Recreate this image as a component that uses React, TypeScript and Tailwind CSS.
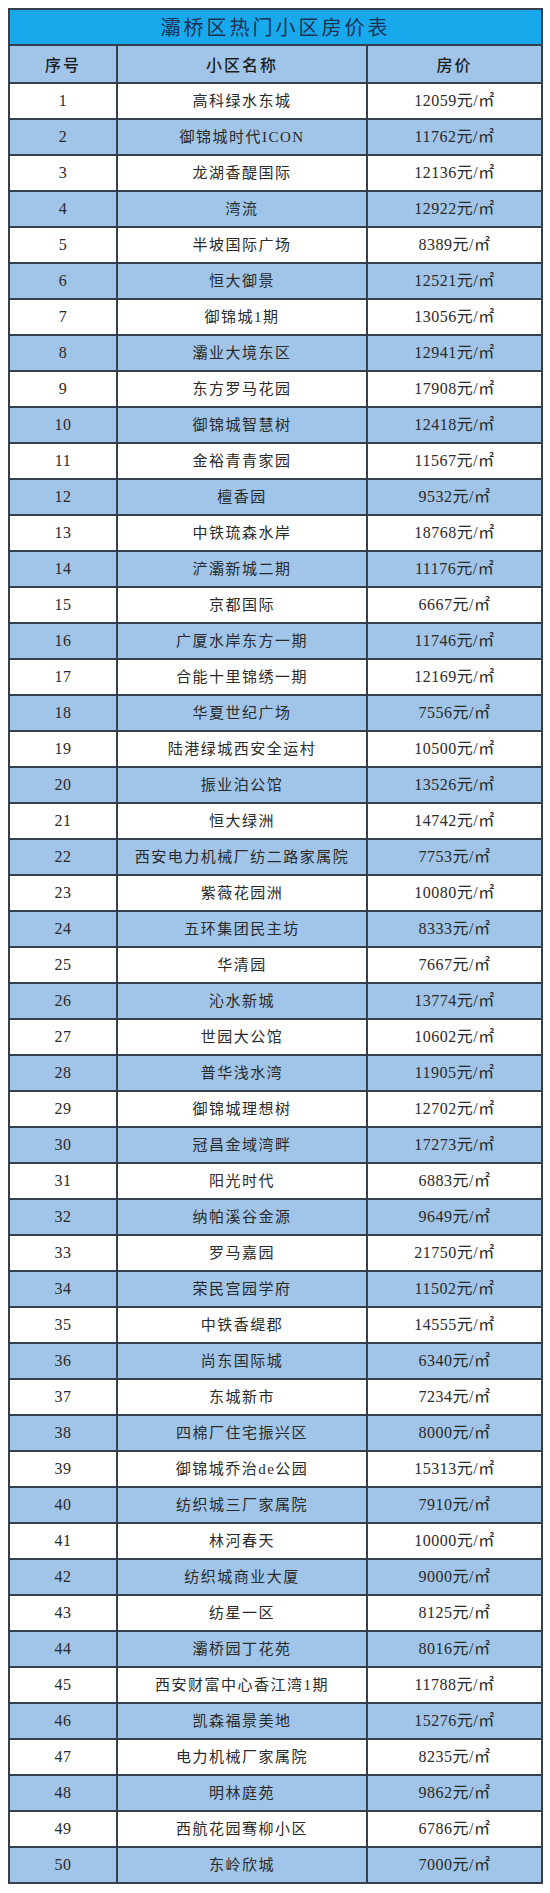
const rows: [string, string][] = [
  ["高科绿水东城", "12059"],
  ["御锦城时代ICON", "11762"],
  ["龙湖香醍国际", "12136"],
  ["湾流", "12922"],
  ["半坡国际广场", "8389"],
  ["恒大御景", "12521"],
  ["御锦城1期", "13056"],
  ["灞业大境东区", "12941"],
  ["东方罗马花园", "17908"],
  ["御锦城智慧树", "12418"],
  ["金裕青青家园", "11567"],
  ["檀香园", "9532"],
  ["中铁琉森水岸", "18768"],
  ["浐灞新城二期", "11176"],
  ["京都国际", "6667"],
  ["广厦水岸东方一期", "11746"],
  ["合能十里锦绣一期", "12169"],
  ["华夏世纪广场", "7556"],
  ["陆港绿城西安全运村", "10500"],
  ["振业泊公馆", "13526"],
  ["恒大绿洲", "14742"],
  ["西安电力机械厂纺二路家属院", "7753"],
  ["紫薇花园洲", "10080"],
  ["五环集团民主坊", "8333"],
  ["华清园", "7667"],
  ["沁水新城", "13774"],
  ["世园大公馆", "10602"],
  ["普华浅水湾", "11905"],
  ["御锦城理想树", "12702"],
  ["冠昌金域湾畔", "17273"],
  ["阳光时代", "6883"],
  ["纳帕溪谷金源", "9649"],
  ["罗马嘉园", "21750"],
  ["荣民宫园学府", "11502"],
  ["中铁香缇郡", "14555"],
  ["尚东国际城", "6340"],
  ["东城新市", "7234"],
  ["四棉厂住宅振兴区", "8000"],
  ["御锦城乔治de公园", "15313"],
  ["纺织城三厂家属院", "7910"],
  ["林河春天", "10000"],
  ["纺织城商业大厦", "9000"],
  ["纺星一区", "8125"],
  ["灞桥园丁花苑", "8016"],
  ["西安财富中心香江湾1期", "11788"],
  ["凯森福景美地", "15276"],
  ["电力机械厂家属院", "8235"],
  ["明林庭苑", "9862"],
  ["西航花园骞柳小区", "6786"],
  ["东岭欣城", "7000"],
];

const serif = "font-['Liberation_Serif','Noto_Sans_CJK_SC',serif]";

export default function App() {
  return (
    <div className="w-[550px] bg-white pt-2 pb-2 pl-2">
      <table className={`w-[533px] border-collapse border-2 border-[#34404e] table-fixed ${serif}`}>
        <colgroup>
          <col className="w-[108px]" />
          <col className="w-[250px]" />
          <col className="w-[175px]" />
        </colgroup>
        <thead>
          <tr className="h-[36px] bg-[#18a8ec]">
            <th colSpan={3} className="border-2 border-[#34404e] text-[20px] font-normal tracking-[3px] text-[#1d3152] font-['Noto_Sans_CJK_SC',sans-serif]">
              灞桥区热门小区房价表
            </th>
          </tr>
          <tr className="h-[38px] bg-[#a0c5e9] text-[16px] text-[#1e1e1e] font-['Noto_Sans_CJK_SC',sans-serif]">
            <th className="border-2 border-[#34404e] font-medium tracking-[2px]">序号</th>
            <th className="border-2 border-[#34404e] font-medium tracking-[2px]">小区名称</th>
            <th className="border-2 border-[#34404e] font-medium tracking-[2px]">房价</th>
          </tr>
        </thead>
        <tbody>
          {rows.map(([name, price], i) => (
            <tr key={i} className={`h-[36px] text-[15px] text-[#2a2a2a] ${i % 2 === 1 ? "bg-[#a0c5e9]" : "bg-white"}`}>
              <td className="border-2 border-[#34404e] text-center text-[16px] tracking-[0.5px]">{i + 1}</td>
              <td className="border-2 border-[#34404e] text-center tracking-[1.5px]">{name}</td>
              <td className="border-2 border-[#34404e] text-center text-[16px] tracking-[0.5px]">
                {price}元/㎡
              </td>
            </tr>
          ))}
        </tbody>
      </table>
    </div>
  );
}
